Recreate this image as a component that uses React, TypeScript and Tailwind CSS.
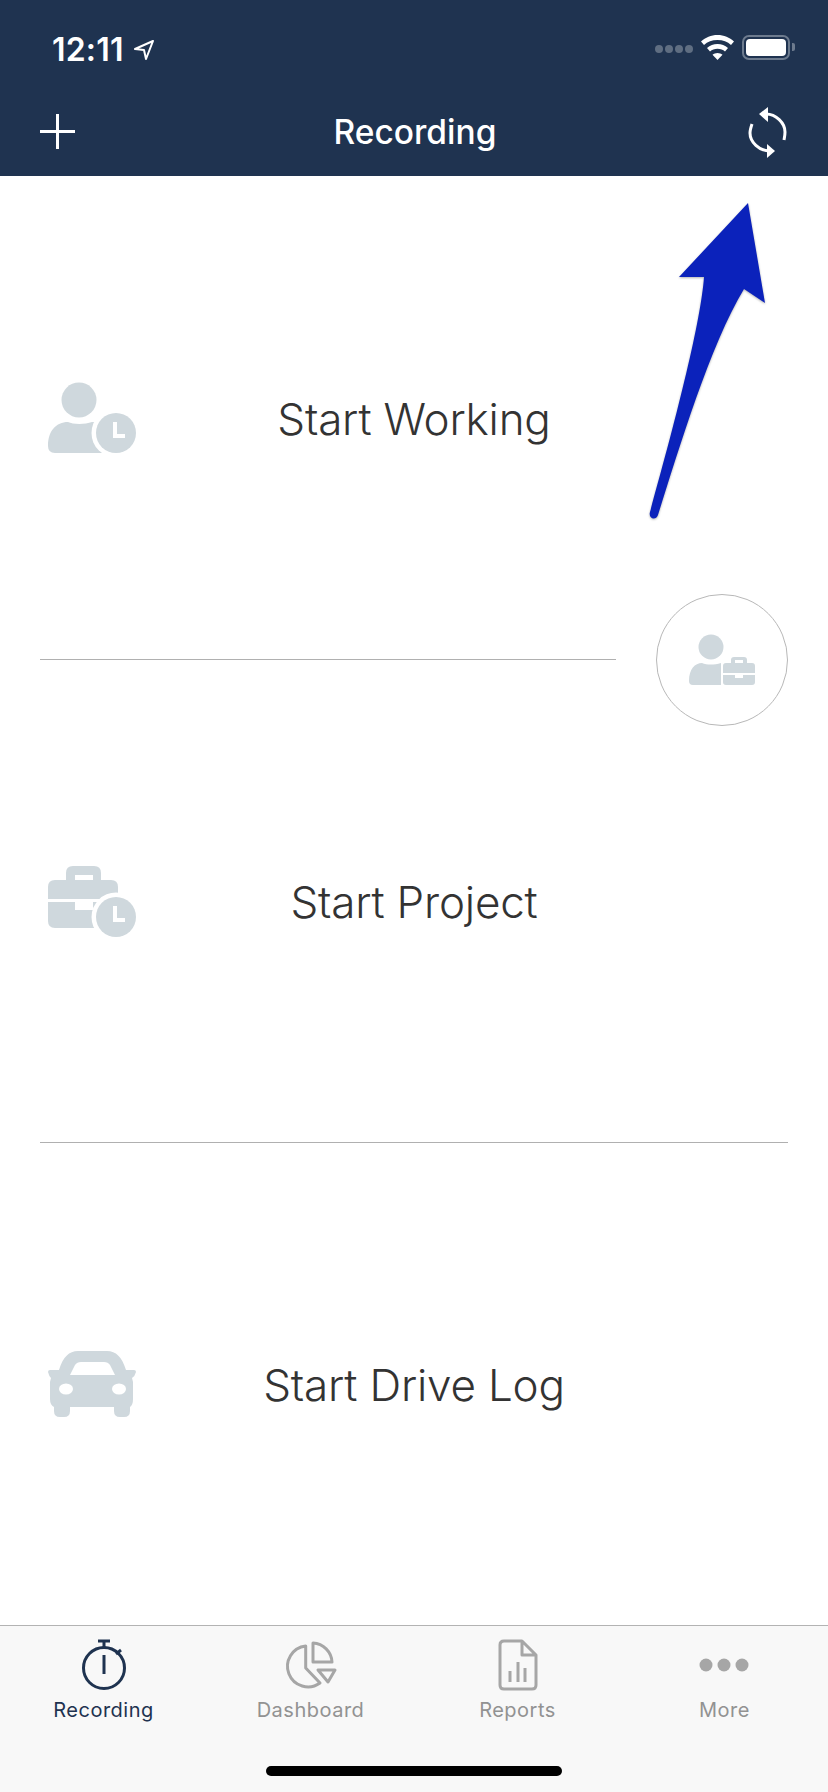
import React from "react";

const ICON = "#cfd8dd";
const NAVY = "#1f3350";
const GREY = "#a6a6a6";

function PersonClock() {
  return (
    <svg width="96" height="80" viewBox="44 378 96 80">
      <circle cx="79" cy="400" r="17.500" fill={ICON} />
      <path
        d="M48 446C48 431 56 422 68 422C73 424.500 85 424.500 92 422C100 422 104 426 106 432V453H55Q48 453 48 446Z"
        fill={ICON}
      />
      <circle cx="116" cy="433" r="24.500" fill="#fff" />
      <circle cx="116" cy="433" r="20" fill={ICON} />
      <path d="M115 422V436H125" stroke="#fff" strokeWidth="4" fill="none" />
    </svg>
  );
}

function CaseClock() {
  return (
    <svg width="96" height="80" viewBox="44 860 96 80">
      <path
        d="M66 879V872Q66 865 73 865H94Q101 865 101 872V879H111Q118 879 118 886V898H48V886Q48 879 55 879ZM75 874V879H93V874Z"
        fill={ICON}
        fillRule="evenodd"
      />
      <path d="M48 901H75V909H93V901H118V927H55Q48 927 48 920Z" fill={ICON} />
      <circle cx="116" cy="916" r="24.500" fill="#fff" />
      <circle cx="116" cy="916" r="20" fill={ICON} />
      <path d="M115 905V919H125" stroke="#fff" strokeWidth="4" fill="none" />
    </svg>
  );
}

function Car() {
  return (
    <svg width="96" height="80" viewBox="44 1345 96 80">
      <path
        d="M78 1352H107C116 1352 122 1358 126 1371H134Q136 1371 136 1373Q135 1377 132 1379L133 1383V1400Q133 1406 130 1408V1412Q130 1418 124 1418H120Q114 1418 114 1412V1408H70V1412Q70 1418 64 1418H60Q54 1418 54 1412V1408Q50 1406 50 1400V1383L51 1379Q49 1377 48 1373Q48 1371 50 1371H59C63 1358 69 1352 78 1352Z"
        fill={ICON}
      />
      <path d="M70 1376L75 1366Q77 1363 81 1363H104Q108 1363 110 1366L115 1376Z" fill="#fff" />
      <ellipse cx="66" cy="1390" rx="7" ry="5.500" fill="#fff" />
      <ellipse cx="119" cy="1390" rx="7" ry="5.500" fill="#fff" />
    </svg>
  );
}

function PersonCase() {
  return (
    <svg width="70" height="60" viewBox="687 630 70 60">
      <circle cx="711" cy="647" r="12.500" fill={ICON} />
      <path d="M689 681C689 669 695 663 702 663C707 665 714 665 721 663V685H693Q689 685 689 681Z" fill={ICON} />
      <path
        d="M731 663V660Q731 657 734 657H744Q747 657 747 660V663H752Q755 663 755 666V673H723V666Q723 663 726 663ZM735 660V663H743V660Z"
        fill={ICON}
        fillRule="evenodd"
      />
      <path d="M723 675H735V678H743V675H755V682Q755 685 752 685H726Q723 685 723 682Z" fill={ICON} />
    </svg>
  );
}

function Row({ icon, label, className }: { icon: React.ReactNode; label: string; className: string }) {
  return (
    <div className={`grid grid-cols-[1fr_auto_1fr] items-center ${className}`}>
      <div className="pl-[44px] flex">{icon}</div>
      <div className="pt-[2px] text-[44px] font-light text-[#333333] tracking-[-0.2px]">{label}</div>
    </div>
  );
}

function Tab({ icon, label, active }: { icon: React.ReactNode; label: string; active?: boolean }) {
  return (
    <div className="flex flex-col items-center">
      <div className="h-[54px] w-full">{icon}</div>
      <div className={`mt-[5px] text-[20px] leading-[28px] tracking-[0.5px] ${active ? "text-[#1f3350]" : "text-[#929292]"}`}>
        {label}
      </div>
    </div>
  );
}

export default function App() {
  return (
    <div className="relative w-[828px] h-[1792px] bg-white overflow-hidden flex flex-col font-['Inter','Liberation_Sans',sans-serif]">
      <div className="h-[176px] bg-[#1f3350] text-white flex flex-col">
        <div className="h-[88px] flex items-start justify-between pt-[31px] pl-[52px] pr-[33px]">
          <div className="flex items-center gap-[9px]">
            <span className="text-[32px] leading-[38px] font-semibold tracking-[0.2px]">12:11</span>
            <svg width="22" height="22" viewBox="0 0 22 22" fill="none" stroke="#fff" strokeWidth="2">
              <path d="M20 2L2 10L11 11L13 20Z" strokeLinejoin="round" />
            </svg>
          </div>
          <div className="flex items-center gap-[8px] h-[32px]">
            <div className="flex gap-[2px] mt-[4px]">
              <span className="w-[8px] h-[8px] rounded-full bg-[#5f6e82]" />
              <span className="w-[8px] h-[8px] rounded-full bg-[#5f6e82]" />
              <span className="w-[8px] h-[8px] rounded-full bg-[#5f6e82]" />
              <span className="w-[8px] h-[8px] rounded-full bg-[#5f6e82]" />
            </div>
            <svg width="33" height="25" viewBox="0 0 33 25" fill="#fff">
              <path d="M16.500 0C10 0 4.500 2.500 0 6.500L3 10C6.500 6.800 11 5 16.500 5C22 5 26.500 6.800 30 10L33 6.500C28.500 2.500 23 0 16.500 0Z" />
              <path d="M16.500 9C12.500 9 9 10.500 6 13L9 16.500C11 14.800 13.500 13.800 16.500 13.800C19.500 13.800 22 14.800 24 16.500L27 13C24 10.500 20.500 9 16.500 9Z" />
              <path d="M16.500 18C14.500 18 13 18.700 11.500 19.800L16.500 25L21.500 19.800C20 18.700 18.500 18 16.500 18Z" />
            </svg>
            <div className="flex items-center gap-[2px]">
              <div className="w-[48px] h-[25px] rounded-[7px] border-2 border-[#6d7b8e] p-[2px]">
                <div className="w-full h-full rounded-[4px] bg-white" />
              </div>
              <div className="w-[3px] h-[8px] rounded-r-[2px] bg-[#6d7b8e]" />
            </div>
          </div>
        </div>
        <div className="h-[88px] grid grid-cols-[1fr_auto_1fr] items-center px-[40px]">
          <svg width="36" height="36" viewBox="0 0 36 36" stroke="#fff" strokeWidth="3">
            <path d="M17.500 0V35M0 17.500H35" />
          </svg>
          <div className="pl-[2px] text-[33.500px] leading-[40px] font-medium">Recording</div>
          <svg width="44" height="56" viewBox="746 105 44 56" className="justify-self-end -mr-[2px]" fill="none">
            <path d="M766 115C776 115 785 124 785 133C785 136 784.500 138 784 141" stroke="#fff" strokeWidth="3" />
            <path d="M759 115L768 108V123Z" fill="#fff" />
            <path d="M770 152C759 152 750 143 750 134C750 131 751 128 752 125" stroke="#fff" strokeWidth="3" />
            <path d="M775 152L767 145V159Z" fill="#fff" />
          </svg>
        </div>
      </div>

      <div className="flex-1 flex flex-col">
        <Row className="h-[483px]" icon={<PersonClock />} label="Start Working" />
        <div className="relative mx-[40px] mr-[212px] h-px bg-[#b0b0b0]">
          <div className="absolute left-[616px] top-[-65px] w-[132px] h-[132px] rounded-full border border-[#b8b8b8] bg-white flex items-center justify-center">
            <PersonCase />
          </div>
        </div>
        <Row className="h-[482px]" icon={<CaseClock />} label="Start Project" />
        <div className="mx-[40px] h-px bg-[#b0b0b0]" />
        <Row className="flex-1" icon={<Car />} label="Start Drive Log" />
      </div>

      <div className="relative h-[167px] bg-[#f8f8f8] border-t border-[#b3b3b3] grid grid-cols-4 pt-[11px]">
        <Tab
          active
          label="Recording"
          icon={
            <svg className="w-full h-[54px]" viewBox="0 1636 207 54" fill="none" stroke={NAVY} strokeWidth="3">
              <circle cx="104" cy="1667" r="20.500" />
              <path d="M98 1640H110M104 1640V1646M104 1654V1673M116 1653L121 1649" />
            </svg>
          }
        />
        <Tab
          label="Dashboard"
          icon={
            <svg className="w-full h-[54px]" viewBox="207 1636 207 54" fill="none" stroke={GREY} strokeWidth="3" strokeLinejoin="round">
              <path d="M305.700 1645A20.500 20.500 0 1 0 320 1682L305.700 1667Z" />
              <path d="M313 1642A20 20 0 0 1 332 1661H313Z" />
              <path d="M318 1669H335L328 1681Z" />
            </svg>
          }
        />
        <Tab
          label="Reports"
          icon={
            <svg className="w-full h-[54px]" viewBox="414 1636 207 54" fill="none" stroke={GREY} strokeWidth="3" strokeLinejoin="round">
              <path d="M522 1640H504Q500 1640 500 1644V1684Q500 1688 504 1688H532Q536 1688 536 1684V1654L522 1640V1654H536" />
              <path d="M510 1670V1681M518 1661V1681M525 1667V1681" />
            </svg>
          }
        />
        <Tab
          label="More"
          icon={
            <svg className="w-full h-[54px]" viewBox="621 1636 207 54" fill={GREY}>
              <circle cx="706" cy="1664" r="6.500" />
              <circle cx="724" cy="1664" r="6.500" />
              <circle cx="742" cy="1664" r="6.500" />
            </svg>
          }
        />
        <div className="absolute left-[266px] top-[140px] w-[296px] h-[10px] rounded-full bg-black" />
      </div>

      <svg className="absolute left-[640px] top-[195px] drop-shadow-[0_1px_1px_rgba(0,0,0,0.3)]" width="135" height="330" viewBox="640 195 135 330">
        <path
          d="M748 203L679 277H704C701 320 678 412 650 512C648 519 656 521 658 515C678 452 710 345 744 289L765 303Z"
          fill="#0b22bb"
        />
      </svg>
    </div>
  );
}
